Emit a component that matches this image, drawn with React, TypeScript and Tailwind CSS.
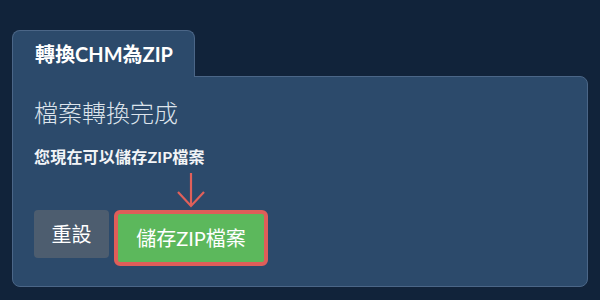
import React from "react";

const font = "font-['Lato','Noto_Sans_CJK_TC',sans-serif]";

function DownArrow() {
  return (
    <svg width="30" height="36" viewBox="0 0 30 36" fill="none" className="block">
      <path d="M15 1v33" stroke="#e0605a" strokeWidth="2.2" />
      <path d="M2 20l13 14 13-14" stroke="#e0605a" strokeWidth="2.2" />
    </svg>
  );
}

export default function App() {
  return (
    <div className={`h-[300px] w-[600px] overflow-hidden bg-[#11233a] px-3 pt-[30px] ${font}`}>
      <div className="relative z-10 -mb-px flex h-[47px] w-[183px] items-center rounded-t-lg border border-b-0 border-[#4b6687] bg-[#2c4a6b] pl-[22px]">
        <span className="text-[20px] font-bold text-white">轉換CHM為ZIP</span>
      </div>
      <div className="h-[211px] w-[576px] rounded-b-lg rounded-tr-lg border border-[#4b6687] bg-[#2c4a6b] px-[21px] pt-[20px]">
        <h1 className="text-[24px] font-light leading-8 text-[#dde4ec]">檔案轉換完成</h1>
        <p className="mt-[16px] text-[16px] font-bold leading-6 tracking-[0.2px] text-[#f2f4f7]">您現在可以儲存ZIP檔案</p>
        <div className="mt-[41px] flex items-start gap-[5px]">
          <button className="h-12 w-[75px] rounded-[4px] bg-[#4d5d6f] text-[20px] text-white">重設</button>
          <div className="relative">
            <div className="absolute -top-[38px] left-1/2 -translate-x-1/2">
              <DownArrow />
            </div>
            <button className="h-[56px] w-[154px] rounded-[6px] border-4 border-[#df5e59] bg-[#5cb85c] text-[20px] text-white">
              儲存ZIP檔案
            </button>
          </div>
        </div>
      </div>
    </div>
  );
}
